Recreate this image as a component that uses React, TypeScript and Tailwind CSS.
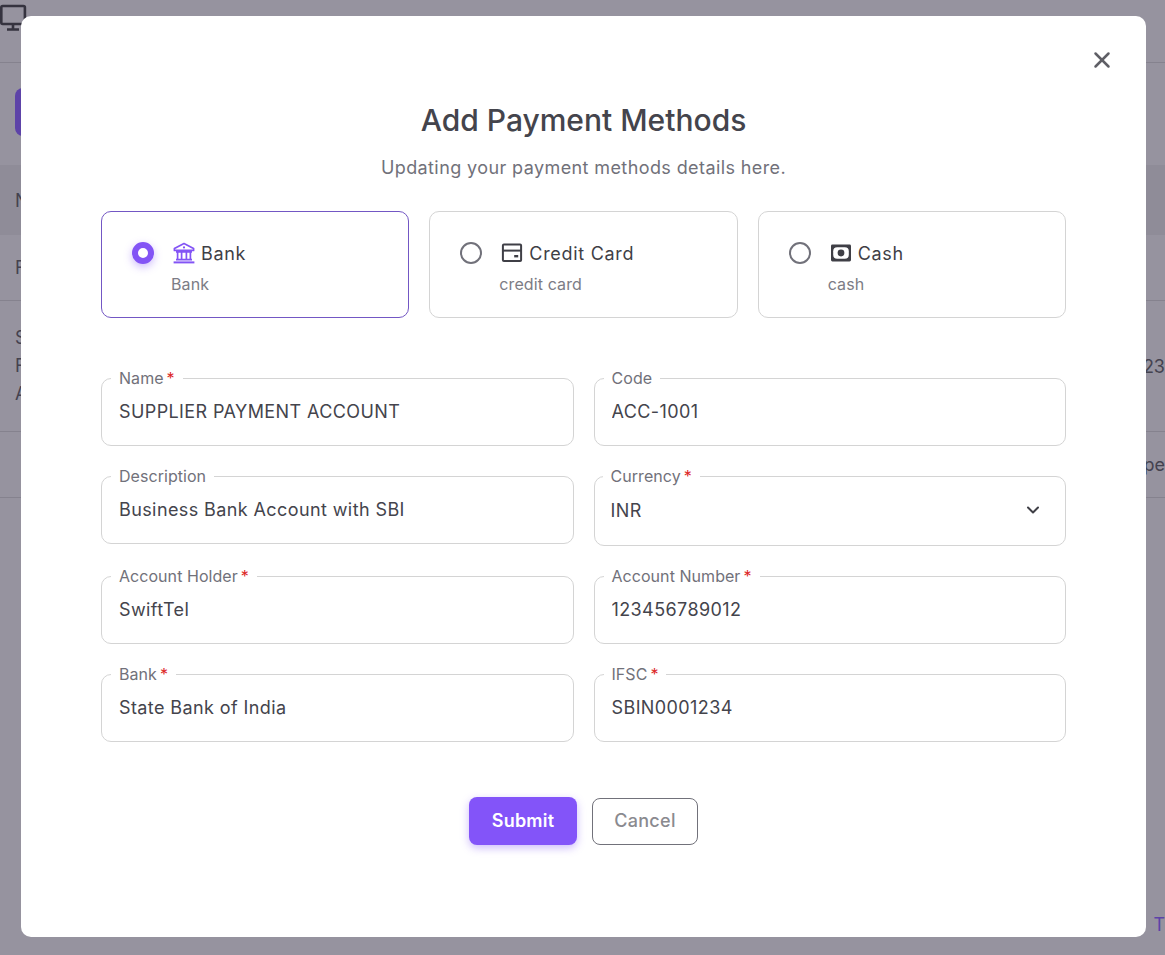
import { ChevronDown, X } from 'lucide-react';

const font = "font-['Inter','Liberation_Sans',sans-serif]";

function BankIcon() {
  return (
    <svg width="22" height="22" viewBox="0 0 22 22" fill="none" className="text-[#8354f5]">
      <path d="M11 1.6 20.6 6.6V8.4H1.4V6.6Z" stroke="currentColor" strokeWidth="1.7" strokeLinejoin="round" />
      <circle cx="11" cy="5.4" r="1.1" fill="currentColor" />
      <path d="M3 9.8h16M4.6 10v7.4M8.6 10v7.4M13.4 10v7.4M17.4 10v7.4M3 17.6h16" stroke="currentColor" strokeWidth="1.7" />
      <path d="M.6 20.4h20.8" stroke="currentColor" strokeWidth="2" />
    </svg>
  );
}

function CardIcon() {
  return (
    <svg width="22" height="22" viewBox="0 0 22 22" fill="none" className="text-[#3f3f46]">
      <rect x="1.9" y="2.4" width="18.2" height="16.6" rx="1" stroke="currentColor" strokeWidth="2" />
      <path d="M2 8.6h18" stroke="currentColor" strokeWidth="2" />
      <rect x="13.2" y="13" width="4" height="2.4" fill="currentColor" />
    </svg>
  );
}

function CashIcon() {
  return (
    <svg width="22" height="22" viewBox="0 0 22 22" fill="none" className="text-[#3f3f46]">
      <rect x="1" y="2.5" width="20" height="17" rx="1.4" fill="currentColor" />
      <rect x="3.2" y="5.2" width="15.6" height="11.6" rx="4" fill="white" />
      <circle cx="11" cy="11" r="3.4" fill="currentColor" />
    </svg>
  );
}

const methods = [
  { title: 'Bank', sub: 'Bank', icon: <BankIcon />, active: true },
  { title: 'Credit Card', sub: 'credit card', icon: <CardIcon />, active: false },
  { title: 'Cash', sub: 'cash', icon: <CashIcon />, active: false },
];

function Field({ label, value, required }: { label: string; value: string; required?: boolean }) {
  return (
    <div className="relative h-[68px] rounded-[10px] border border-[#d4d4d4]">
      <label className="absolute -top-[11px] left-[9px] flex h-5 items-center bg-white px-[8px] text-[16px] leading-5 tracking-[0.05px] text-[#71717a]">
        {label}
        {required && <span className="ml-[3px] text-[#dc2626]">*</span>}
      </label>
      <input
        readOnly
        value={value}
        className="h-full w-full rounded-[10px] bg-transparent px-[17px] pb-[2px] text-[18px] tracking-[0.4px] text-[#44444c] outline-none"
      />
    </div>
  );
}

function Backdrop() {
  return (
    <div className="flex h-[955px] flex-col overflow-hidden bg-[#96939f] text-[18px] text-[#44424f]">
      <div className="h-[63px] border-b border-[#85828e] pt-[3px]">
        <svg width="28" height="28" viewBox="0 0 28 28" fill="none" className="text-[#35333f]">
          <rect x="1.3" y="3" width="23.6" height="18" rx="1.5" stroke="currentColor" strokeWidth="2.6" />
          <path d="M13 21v5M7 26.5h12" stroke="currentColor" strokeWidth="2.6" />
        </svg>
      </div>
      <div className="h-[102px] pl-[15px] pt-[25px]">
        <div className="h-[48px] w-[40px] rounded-l-[8px] bg-[#5d43a8]" />
      </div>
      <div className="flex h-[70px] items-center bg-[#8f8c98] pl-[15px]">N</div>
      <div className="flex h-[66px] items-center border-b border-[#85828e] pl-[15px]">F</div>
      <div className="flex h-[131px] items-center justify-between border-b border-[#85828e] pl-[15px]">
        <div className="leading-[28px]">
          S<br />F<br />A
        </div>
        <span>1234523</span>
      </div>
      <div className="flex h-[66px] items-center justify-end border-b border-[#85828e]">
        <span>pe</span>
      </div>
      <div className="flex flex-1 items-end justify-end pb-[17px] text-[#5d43a8]">T</div>
    </div>
  );
}

export default function App() {
  return (
    <div className={`relative h-[955px] overflow-hidden ${font}`}>
      <Backdrop />
      <div className="absolute inset-0 pl-[21px] pt-[16px]">
        <div className="relative h-[921px] w-[1125px] rounded-[10px] bg-white px-[80px] pt-[84px]">
          <button className="absolute right-[31px] top-[31px] text-[#5f5f66]">
            <X size={26} strokeWidth={2.3} />
          </button>
          <h2 className="text-center text-[30px] font-medium leading-[40px] text-[#44444c]">Add Payment Methods</h2>
          <p className="mt-[18px] text-center text-[18px] leading-[20px] tracking-[0.4px] text-[#71717a]">
            Updating your payment methods details here.
          </p>
          <div className="mt-[33px] grid grid-cols-3 gap-[20px]">
            {methods.map(m => (
              <div
                key={m.title}
                className={`flex h-[107px] gap-[17px] rounded-[10px] border pl-[30px] pt-[29px] ${
                  m.active ? 'border-[#7357c4]' : 'border-[#d4d4d4]'
                }`}
              >
                {m.active ? (
                  <span className="mt-px size-[22px] rounded-full border-[6px] border-[#8354f5] bg-white shadow-[0_3px_8px_rgba(131,84,245,0.4)]" />
                ) : (
                  <span className="mt-px size-[22px] rounded-full border-[2.5px] border-[#71717a]" />
                )}
                <div>
                  <div className="flex h-[24px] items-center gap-[6px] pl-[2px] text-[18px] tracking-[0.7px] text-[#3f3f46]">
                    {m.icon}
                    {m.title}
                  </div>
                  <div className="mt-[9px] text-[16px] leading-[20px] tracking-[0.1px] text-[#7c7c85]">{m.sub}</div>
                </div>
              </div>
            ))}
          </div>
          <div className="mt-[60px] grid grid-cols-2 items-start gap-x-[20px] gap-y-[30px]">
            <Field label="Name" value="SUPPLIER PAYMENT ACCOUNT" required />
            <Field label="Code" value="ACC-1001" />
            <Field label="Description" value="Business Bank Account with SBI" />
            <div className="relative flex h-[70px] items-center justify-between rounded-[10px] border border-[#d4d4d4] pb-[2px] pl-[16px] pr-[22px]">
              <label className="absolute -top-[11px] left-[8px] flex h-5 items-center bg-white px-[8px] text-[16px] leading-5 tracking-[0.05px] text-[#71717a]">
                Currency<span className="ml-[3px] text-[#dc2626]">*</span>
              </label>
              <span className="text-[18px] tracking-[0.4px] text-[#44444c]">INR</span>
              <ChevronDown size={20} strokeWidth={2.4} className="text-[#3f3f46]" />
            </div>
            <Field label="Account Holder" value="SwiftTel" required />
            <Field label="Account Number" value="123456789012" required />
            <Field label="Bank" value="State Bank of India" required />
            <Field label="IFSC" value="SBIN0001234" required />
          </div>
          <div className="mt-[55px] flex items-center justify-center gap-[15px]">
            <button className="h-[48px] w-[108px] rounded-[8px] bg-[#8354f9] pb-[2px] text-[18px] font-semibold tracking-[0.2px] text-white shadow-[0_3px_8px_rgba(131,84,245,0.4)]">
              Submit
            </button>
            <button className="h-[47px] w-[106px] rounded-[8px] border border-[#71717a] pb-[2px] text-[18px] font-medium tracking-[0.3px] text-[#8a8a8f]">
              Cancel
            </button>
          </div>
        </div>
      </div>
    </div>
  );
}
